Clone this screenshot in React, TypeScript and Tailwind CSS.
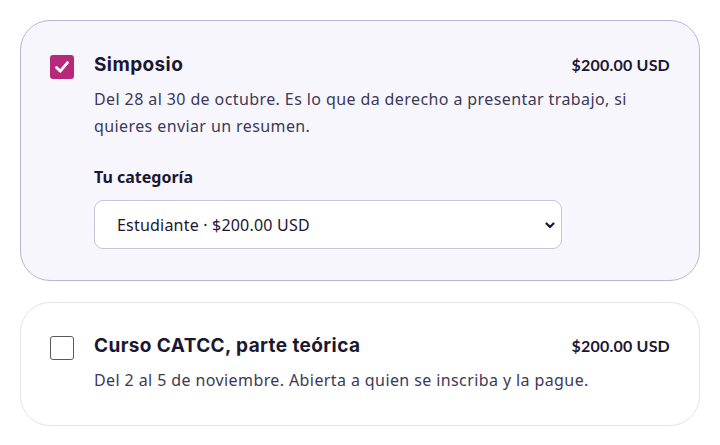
import React from "react";

const body = { fontFamily: '"Noto Sans", "Open Sans", sans-serif' };
const head = { fontFamily: 'Inter, "Noto Sans", sans-serif' };
const label = { fontFamily: 'Lato, "Noto Sans", sans-serif' };

export default function App() {
  return (
    <div className="w-[720px] h-[445px] bg-white px-5 pt-5 flex flex-col gap-[21px]" style={body}>
      <div className="rounded-[30px] border border-[#b9b4d8] bg-[#f7f6fd] pl-[29px] pr-[29px] pt-[33px] pb-[31px] flex gap-5">
        <div className="w-6 h-6 rounded-[3px] bg-[#b8287b] flex items-center justify-center shrink-0 mt-[1px]">
          <svg width="18" height="18" viewBox="0 0 18 18">
            <path d="M3.5 9.5 L7.3 13.2 L14.5 4.6" fill="none" stroke="white" strokeWidth="2.8" strokeLinecap="round" strokeLinejoin="round" />
          </svg>
        </div>
        <div className="flex-1 flex flex-col">
          <div className="flex justify-between items-center h-[22px]">
            <span className="text-[19px] font-bold text-[#1b1731] tracking-[0.4px]" style={head}>Simposio</span>
            <span className="text-[16px] font-bold text-[#1b1731] tracking-[0.2px]" style={label}>$200.00 USD</span>
          </div>
          <p className="mt-[10px] text-[16px] leading-[27px] text-[#3c3957] tracking-[0.4px]">
            Del 28 al 30 de octubre. Es lo que da derecho a presentar trabajo, si quieres enviar un resumen.
          </p>
          <div className="mt-[25px] text-[16px] font-bold text-[#1b1731]">Tu categoría</div>
          <div className="mt-[11px] w-[468px] h-[49px] rounded-[9px] border border-[#c7c4de] bg-white flex items-center justify-between pl-[22px] pr-[5px]">
            <span className="text-[16px] text-[#1b1731] tracking-[0.2px]">Estudiante · $200.00 USD</span>
            <svg width="12" height="12" viewBox="0 0 12 12">
              <path d="M2.5 4.5 L6 8 L9.5 4.5" fill="none" stroke="#1b1731" strokeWidth="2.2" strokeLinecap="round" strokeLinejoin="round" />
            </svg>
          </div>
        </div>
      </div>
      <div className="rounded-[30px] border border-[#e4e4ea] bg-white pl-[29px] pr-[29px] pt-[32px] pb-[31px] flex gap-5">
        <div className="w-6 h-6 rounded-[3px] border-[1.5px] border-[#5a5a5a] bg-white shrink-0 mt-[1px]" />
        <div className="flex-1 flex flex-col">
          <div className="flex justify-between items-center h-[22px]">
            <span className="text-[19px] font-bold text-[#1b1731] tracking-[0.4px]" style={head}>Curso CATCC, parte teórica</span>
            <span className="text-[16px] font-bold text-[#1b1731] tracking-[0.2px]" style={label}>$200.00 USD</span>
          </div>
          <p className="mt-[10px] text-[16px] leading-[27px] text-[#3c3957] tracking-[0.4px]">
            Del 2 al 5 de noviembre. Abierta a quien se inscriba y la pague.
          </p>
        </div>
      </div>
    </div>
  );
}
